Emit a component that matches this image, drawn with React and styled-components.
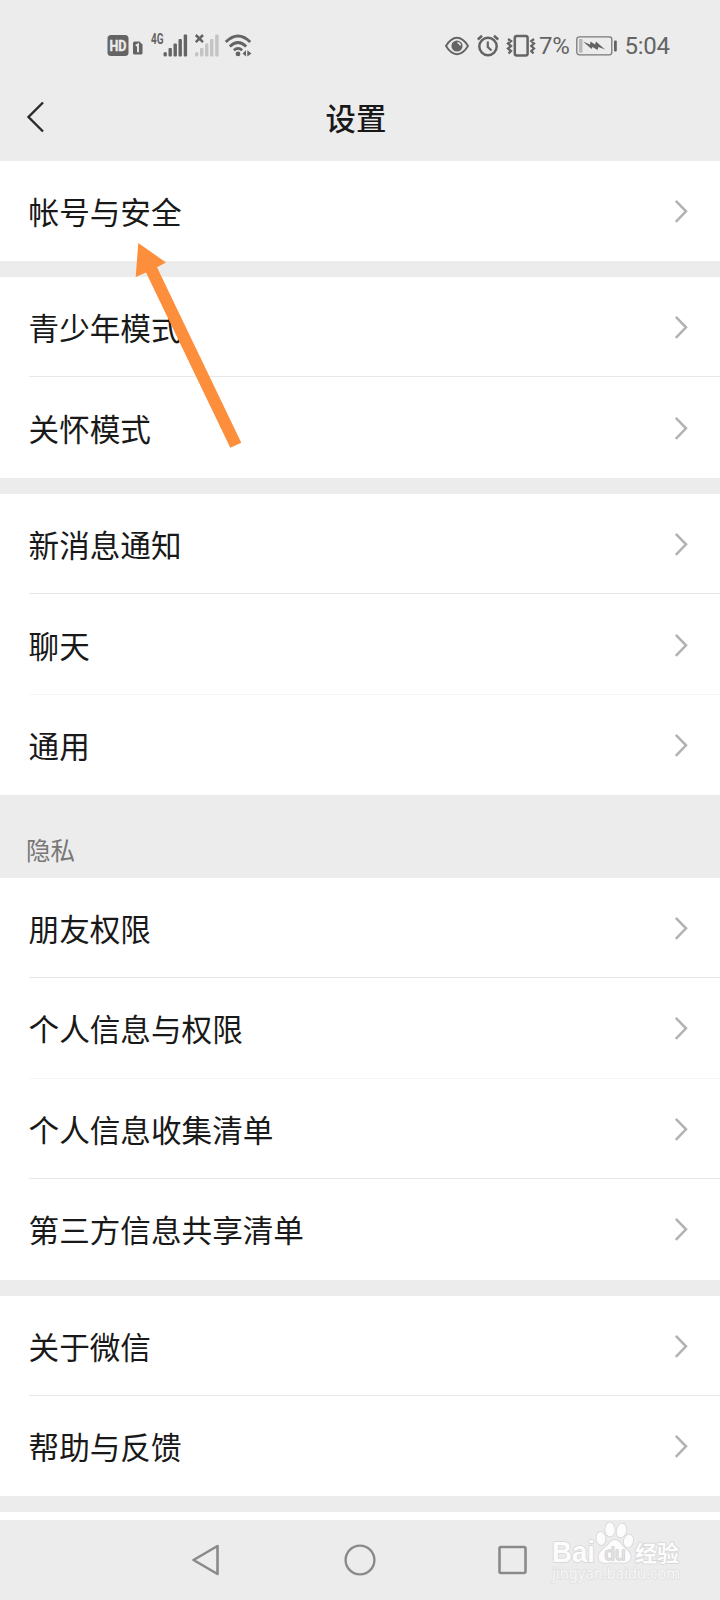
import React from "react";
import styled, { createGlobalStyle } from "styled-components";

const GlobalStyle = createGlobalStyle`
  * {
    box-sizing: border-box;
  }

  body {
    margin: 0;
    background: #ececec;
    font-family: "Noto Sans CJK SC", "Noto Sans", sans-serif;
  }
`;

const Screen = styled.div`
  position: relative;
  display: flex;
  flex-direction: column;
  width: 720px;
  height: 1600px;
  overflow: hidden;
  background: #ececec;
`;

const StatusBar = styled.div`
  display: flex;
  align-items: center;
  justify-content: space-between;
  height: 75px;
  padding: 16px 50px 0 107px;
  color: #646464;
`;

const StatusGroup = styled.div`
  display: flex;
  align-items: center;
`;

const StatusIcon = styled.svg`
  display: block;
  flex: none;
  margin-right: ${(props) => props.$gap || 0}px;
  overflow: visible;
`;

const StatusText = styled.span`
  width: ${(props) => props.$width}px;
  padding-top: 1px;
  font-family: Roboto, sans-serif;
  font-size: 24px;
  line-height: 28px;
  letter-spacing: -0.3px;
  white-space: nowrap;
`;

const TitleBar = styled.header`
  display: grid;
  grid-template-columns: 70px 1fr 78px;
  align-items: center;
  height: 85.6px;
  padding-bottom: 1.6px;
`;

const BackButton = styled.button`
  display: flex;
  padding: 0 0 0 26px;
  border: 0;
  background: none;
`;

const Title = styled.h1`
  margin: 0;
  color: #191919;
  font-size: 30.4px;
  font-weight: 500;
  line-height: 44px;
  text-align: center;
`;

const List = styled.main`
  height: 1359.4px;
  overflow: hidden;
`;

const Group = styled.section`
  margin-bottom: 16px;
  background: #fff;
`;

const Row = styled.div`
  height: 100.45px;
  padding-left: 28.6px;
`;

const RowInner = styled.div`
  display: flex;
  align-items: center;
  justify-content: space-between;
  height: 100%;
  padding: 1px 32px 0 0;
  border-bottom: 1px solid ${(props) => props.$line};
`;

const RowLabel = styled.span`
  color: #191919;
  font-size: 30.6px;
  line-height: 44px;
`;

const SectionLabel = styled.h2`
  display: flex;
  align-items: flex-end;
  height: 66.6px;
  margin: 0;
  padding: 0 0 10px 26px;
  color: #777;
  font-size: 24.5px;
  font-weight: 400;
  line-height: 36px;
`;

const NextPage = styled.div`
  height: 8px;
  background: #fff;
`;

const NavBar = styled.nav`
  display: flex;
  align-items: center;
  justify-content: center;
  height: 80px;
`;

const NavButton = styled.button`
  display: flex;
  justify-content: center;
  width: 153.3px;
  padding: 0;
  border: 0;
  background: none;
`;

const ArrowMark = styled.svg`
  position: absolute;
  top: 240px;
  left: 132px;
`;

const Watermark = styled.svg`
  position: absolute;
  top: 1518px;
  left: 546px;
`;

const groups = [
  { items: ["帐号与安全"] },
  { items: ["青少年模式", "关怀模式"] },
  { items: ["新消息通知", "聊天", "通用"] },
  {
    label: "隐私",
    items: ["朋友权限", "个人信息与权限", "个人信息收集清单", "第三方信息共享清单"],
  },
  { items: ["关于微信", "帮助与反馈"] },
];

// the second line of a group is drawn fainter, the last row has none
const lineColor = (index, count) => {
  if (index === count - 1) return "transparent";
  return index === 1 ? "#f5f5f5" : "#e8e8e8";
};

const Chevron = () => (
  <svg width="14" height="24" viewBox="0 0 14 24" fill="none">
    <path d="M1.8 1.8 12 12.3 1.8 22.8" stroke="#b2b2b2" strokeWidth="2.5" />
  </svg>
);

const SignalBars = ({ color }) => (
  <g fill={color}>
    <rect x="0" y="17.5" width="3.4" height="4.5" rx="1.6" />
    <rect x="5" y="13.5" width="3.4" height="8.5" rx="1" />
    <rect x="10" y="9" width="3.4" height="13" rx="1" />
    <rect x="15" y="4.5" width="3.4" height="17.5" rx="1" />
    <rect x="20.2" y="0" width="3.4" height="22" rx="1" />
  </g>
);

const NetworkIcons = () => (
  <StatusGroup>
    <StatusIcon $gap={4} width="22" height="22" viewBox="0 0 22 22">
      <rect x="0.5" y="0" width="21" height="21" rx="3.5" fill="#646464" />
      <text x="2.5" y="16" textLength="17" lengthAdjust="spacingAndGlyphs" fill="#ececec" stroke="#ececec" strokeWidth="0.4" fontFamily="Roboto, sans-serif" fontSize="15.5" fontWeight="700">
        HD
      </text>
    </StatusIcon>
    <StatusIcon $gap={8} width="10" height="22" viewBox="0 0 10 22">
      <path d="M1.5 6.5H6.5L9.5 9.5V18Q9.5 19.5 8 19.5H1.5Q0 19.5 0 18V8Q0 6.5 1.5 6.5Z" fill="#646464" />
      <path d="M2.8 10.8 5 9.4V17.2" stroke="#ececec" strokeWidth="1.9" fill="none" />
    </StatusIcon>
    <StatusIcon $gap={7} width="37" height="22" viewBox="0 0 37 22">
      <text x="0" y="9.2" textLength="12.5" lengthAdjust="spacingAndGlyphs" fill="#646464" fontFamily="Roboto, sans-serif" fontSize="14" fontWeight="700">
        4G
      </text>
      <g transform="translate(12.5 -0.5)">
        <SignalBars color="#646464" />
      </g>
    </StatusIcon>
    <StatusIcon $gap={6} width="24" height="22" viewBox="0 0.5 24 22">
      <SignalBars color="#c4c4c4" />
      <path d="M0.8 0.5 8 7.7M8 0.5 0.8 7.7" stroke="#646464" strokeWidth="2.5" />
    </StatusIcon>
    <StatusIcon width="27" height="22" viewBox="0 0.5 27 22" fill="none" stroke="#646464">
      <path d="M0.8 7.5Q13 -4.5 25.2 7.5" strokeWidth="2.8" />
      <path d="M4.8 12Q13 4 21.2 12" strokeWidth="2.8" />
      <path d="M8.8 15.8Q13 12 17.2 15.8" strokeWidth="2.5" />
      <circle cx="13" cy="19.4" r="2.4" fill="#646464" stroke="none" />
      <path d="M21 15.8V22L17.5 19ZM22.3 15.8V22L26.5 19Z" fill="#646464" stroke="none" />
    </StatusIcon>
  </StatusGroup>
);

const SystemIcons = () => (
  <StatusGroup>
    <StatusIcon $gap={8} width="24" height="22" viewBox="0 0 24 22" fill="none">
      <path d="M1 11Q6 2.8 12 2.8T23 11Q18 19.2 12 19.2T1 11Z" stroke="#646464" strokeWidth="1.9" />
      <circle cx="12" cy="11" r="5.6" fill="#646464" />
      <path d="M12.5 7.7A3.1 3.1 0 0 1 15.3 10.5" stroke="#ececec" strokeWidth="1.5" />
    </StatusIcon>
    <StatusIcon $gap={8} width="22" height="22" viewBox="0 0.5 22 22" fill="none" stroke="#646464">
      <circle cx="11" cy="12" r="8.7" strokeWidth="2.5" />
      <path d="M0.8 5 5 1.2M17 1.2 21.2 5" strokeWidth="2.5" />
      <path d="M10.8 7V12.5L14.5 16" strokeWidth="2.2" />
    </StatusIcon>
    <StatusIcon $gap={4} width="28" height="22" viewBox="0 0 28 22" fill="none" stroke="#646464">
      <rect x="7.8" y="1" width="12.8" height="19.6" rx="2" strokeWidth="2.5" />
      <path d="M1 4 4 6 1 8.5 4 11 1 13.5 4 16 1.5 18.5M27 4 24.3 6 27 8.5 24.3 11 27 13.5 24.3 16 26.5 18.5" strokeWidth="2.3" />
    </StatusIcon>
    <StatusText $width={36.6}>7%</StatusText>
    <StatusIcon $gap={8} width="41" height="20" viewBox="0 0 41 20">
      <rect x="0.8" y="0.8" width="35" height="18" rx="2.5" fill="none" stroke="#787878" strokeWidth="1.3" />
      <rect x="3" y="3" width="3.5" height="13.6" fill="#b8b8b8" />
      <path d="M7 5.5 14 8.5 14.5 5.5 19 8.5 20 5.5 29 13.5 22.5 11 21.5 14 16.5 11 15.5 13Z" fill="#646464" />
      <rect x="38" y="4.5" width="2.8" height="11" rx="1" fill="#646464" />
    </StatusIcon>
    <StatusText $width={45.4}>5:04</StatusText>
  </StatusGroup>
);

const BaiduWatermark = () => (
  <Watermark width="150" height="70" viewBox="0 0 150 70">
    <g fill="#fcfcfc" stroke="#d6d6d6" strokeWidth="1.6" paintOrder="stroke" strokeLinejoin="round">
      <text x="6" y="43.5" textLength="43" lengthAdjust="spacingAndGlyphs" fontFamily="Liberation Sans, sans-serif" fontSize="29" fontWeight="700">
        Bai
      </text>
      <ellipse cx="55" cy="20.5" rx="4.5" ry="6.5" transform="rotate(-8 55 20.5)" />
      <ellipse cx="64" cy="11.5" rx="4.7" ry="7" />
      <ellipse cx="75.5" cy="12.5" rx="4.7" ry="7" transform="rotate(12 75.5 12.5)" />
      <ellipse cx="82.5" cy="23" rx="4.5" ry="6.5" transform="rotate(15 82.5 23)" />
      <path d="M69 22Q73 22 76 27.5L83 34Q86 39 83.5 42.5Q80 46 74 44.5H63Q57 46 53.5 43Q51 38 55 33L62 27Q65 22 69 22Z" />
      <text x="58.5" y="42" textLength="21" lengthAdjust="spacingAndGlyphs" fontFamily="Liberation Sans, sans-serif" fontSize="19" fill="#e2e2e2" stroke="#cfcfcf" strokeWidth="1.4">
        du
      </text>
      <text x="89" y="43" textLength="44" fontFamily="Noto Sans CJK SC, sans-serif" fontSize="22" fontWeight="700">
        经验
      </text>
    </g>
    <text x="6" y="60.5" textLength="128" lengthAdjust="spacingAndGlyphs" fill="#f8f8f8" stroke="#dadada" strokeWidth="1.2" paintOrder="stroke" fontFamily="Noto Sans, sans-serif" fontSize="15.5">
      jingyan.baidu.com
    </text>
  </Watermark>
);

const App = () => {
  return (
    <Screen>
      <GlobalStyle />
      <StatusBar>
        <NetworkIcons />
        <SystemIcons />
      </StatusBar>
      <TitleBar>
        <BackButton aria-label="返回">
          <svg width="20" height="32" viewBox="0 0 20 32" fill="none">
            <path d="M17 1.5 2.5 16 17 30.5" stroke="#2b2b2b" strokeWidth="2.4" />
          </svg>
        </BackButton>
        <Title>设置</Title>
      </TitleBar>
      <List>
        {groups.map((group) => (
          <React.Fragment key={group.items[0]}>
            {group.label && <SectionLabel>{group.label}</SectionLabel>}
            <Group>
              {group.items.map((item, index) => (
                <Row key={item}>
                  <RowInner $line={lineColor(index, group.items.length)}>
                    <RowLabel>{item}</RowLabel>
                    <Chevron />
                  </RowInner>
                </Row>
              ))}
            </Group>
          </React.Fragment>
        ))}
        <NextPage />
      </List>
      <NavBar>
        <NavButton aria-label="后退">
          <svg width="32" height="32" viewBox="0 0 32 32" fill="none">
            <path d="M26.5 2V30L2.5 16Z" stroke="#8a8a8a" strokeWidth="2.6" strokeLinejoin="round" />
          </svg>
        </NavButton>
        <NavButton aria-label="主页">
          <svg width="32" height="32" viewBox="0 0 32 32" fill="none">
            <circle cx="16" cy="16" r="14.4" stroke="#8a8a8a" strokeWidth="2.4" />
          </svg>
        </NavButton>
        <NavButton aria-label="最近任务">
          <svg width="31" height="30" viewBox="0 0 31 30" fill="none">
            <rect x="1.5" y="2" width="26" height="26" rx="1.5" stroke="#8a8a8a" strokeWidth="2.6" />
          </svg>
        </NavButton>
      </NavBar>
      <ArrowMark width="112" height="210" viewBox="132 240 112 210">
        <path d="M138.3 243 166 262.5 157 267.2 241.3 442.7 230.3 447.7 146 272.5 135.7 277Z" fill="#fd8e3c" />
      </ArrowMark>
      <BaiduWatermark />
    </Screen>
  );
};

export default App;
